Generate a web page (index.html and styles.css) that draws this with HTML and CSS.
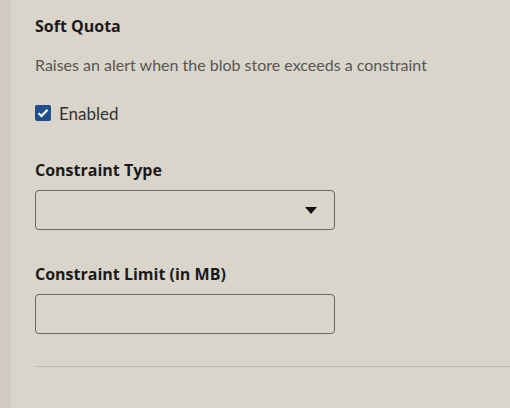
FILE: index.html
```html
<!DOCTYPE html>
<html>
<head>
<meta charset="utf-8">
<link rel="stylesheet" href="styles.css">
</head>
<body>
<div class="page">
  <div class="rail"></div>
  <main class="content">
    <h2 class="title">Soft Quota</h2>
    <p class="desc">Raises an alert when the blob store exceeds a constraint</p>
    <label class="check">
      <span class="box"><svg width="12" height="10" viewBox="0 0 12 10"><path d="M1.5 5.2 L4.5 8 L10.5 1.8" fill="none" stroke="#fff" stroke-width="2.2"/></svg></span>
      <span class="check-label">Enabled</span>
    </label>
    <div class="field">
      <div class="label">Constraint Type</div>
      <div class="select"><svg class="caret" width="12" height="7" viewBox="0 0 12 7"><path d="M0 0 H12 L6 7 Z" fill="#111"/></svg></div>
    </div>
    <div class="field">
      <div class="label">Constraint Limit (in MB)</div>
      <div class="input"></div>
    </div>
    <hr class="divider">
  </main>
</div>
</body>
</html>
```
FILE: styles.css
```css
html, body { margin: 0; padding: 0; }
body { background: #dad5cb; width: 510px; height: 408px; overflow: hidden; font-family: "Open Sans", sans-serif; color: #1a1a1a; }
.page { display: flex; height: 408px; }
.rail { width: 11px; background: #d1cbc1; flex: none; }
.content { flex: 1; padding: 14px 0 0 24px; }
.title { margin: 0; font-size: 16px; font-weight: 700; line-height: 24px; }
.desc { margin: 17px 0 0; font-size: 16px; color: #555; line-height: 20px; font-family: "Lato", sans-serif; }
.check { display: flex; align-items: center; gap: 8px; margin-top: 26px; height: 24px; }
.box { width: 16px; height: 16px; background: #1f4e8c; border-radius: 2px; display: flex; align-items: center; justify-content: center; }
.check-label { font-size: 17px; color: #333; font-family: "Lato", sans-serif; }
.field { margin-top: 33px; }
.field + .field { margin-top: 32px; }
.label { font-size: 16px; font-weight: 700; line-height: 24px; }
.select, .input { box-sizing: border-box; width: 300px; height: 40px; border: 1px solid #6b6a62; border-radius: 4px; margin-top: 8px; position: relative; }
.caret { position: absolute; right: 17px; top: 16px; }
.divider { margin: 32px 0 0; border: 0; border-top: 1px solid #bbb8b0; }
```
